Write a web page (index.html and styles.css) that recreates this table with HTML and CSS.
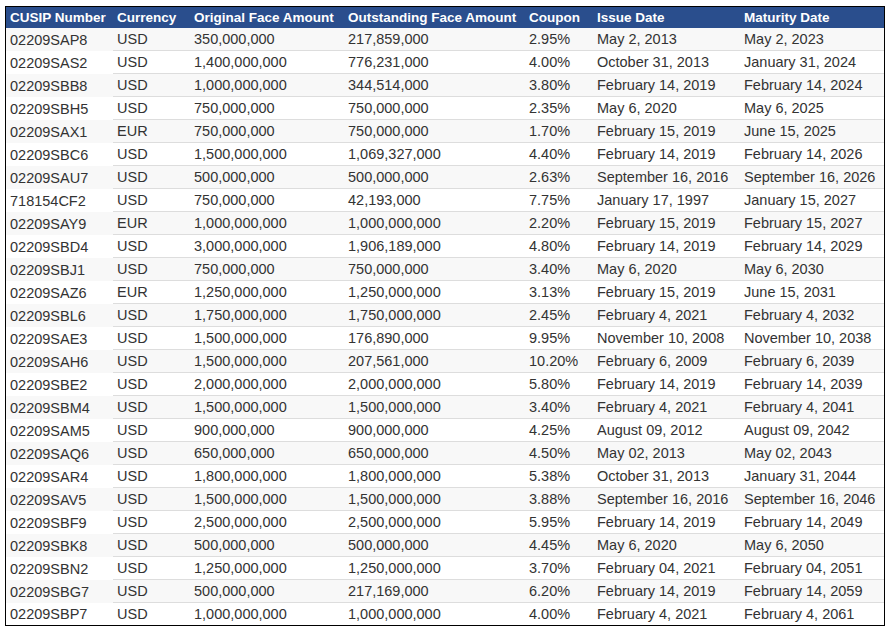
FILE: index.html
```html
<!DOCTYPE html>
<html>
<head>
<meta charset="utf-8">
<link rel="stylesheet" href="styles.css">
</head>
<body>
<table class="bonds">
<colgroup>
<col class="c1"><col class="c2"><col class="c3"><col class="c4"><col class="c5"><col class="c6"><col class="c7">
</colgroup>
<thead>
<tr><th>CUSIP Number</th><th>Currency</th><th>Original Face Amount</th><th>Outstanding Face Amount</th><th>Coupon</th><th>Issue Date</th><th>Maturity Date</th></tr>
</thead>
<tbody>
<tr><td>02209SAP8</td><td>USD</td><td>350,000,000</td><td>217,859,000</td><td>2.95%</td><td>May 2, 2013</td><td>May 2, 2023</td></tr>
<tr><td>02209SAS2</td><td>USD</td><td>1,400,000,000</td><td>776,231,000</td><td>4.00%</td><td>October 31, 2013</td><td>January 31, 2024</td></tr>
<tr><td>02209SBB8</td><td>USD</td><td>1,000,000,000</td><td>344,514,000</td><td>3.80%</td><td>February 14, 2019</td><td>February 14, 2024</td></tr>
<tr><td>02209SBH5</td><td>USD</td><td>750,000,000</td><td>750,000,000</td><td>2.35%</td><td>May 6, 2020</td><td>May 6, 2025</td></tr>
<tr><td>02209SAX1</td><td>EUR</td><td>750,000,000</td><td>750,000,000</td><td>1.70%</td><td>February 15, 2019</td><td>June 15, 2025</td></tr>
<tr><td>02209SBC6</td><td>USD</td><td>1,500,000,000</td><td>1,069,327,000</td><td>4.40%</td><td>February 14, 2019</td><td>February 14, 2026</td></tr>
<tr><td>02209SAU7</td><td>USD</td><td>500,000,000</td><td>500,000,000</td><td>2.63%</td><td>September 16, 2016</td><td>September 16, 2026</td></tr>
<tr><td>718154CF2</td><td>USD</td><td>750,000,000</td><td>42,193,000</td><td>7.75%</td><td>January 17, 1997</td><td>January 15, 2027</td></tr>
<tr><td>02209SAY9</td><td>EUR</td><td>1,000,000,000</td><td>1,000,000,000</td><td>2.20%</td><td>February 15, 2019</td><td>February 15, 2027</td></tr>
<tr><td>02209SBD4</td><td>USD</td><td>3,000,000,000</td><td>1,906,189,000</td><td>4.80%</td><td>February 14, 2019</td><td>February 14, 2029</td></tr>
<tr><td>02209SBJ1</td><td>USD</td><td>750,000,000</td><td>750,000,000</td><td>3.40%</td><td>May 6, 2020</td><td>May 6, 2030</td></tr>
<tr><td>02209SAZ6</td><td>EUR</td><td>1,250,000,000</td><td>1,250,000,000</td><td>3.13%</td><td>February 15, 2019</td><td>June 15, 2031</td></tr>
<tr><td>02209SBL6</td><td>USD</td><td>1,750,000,000</td><td>1,750,000,000</td><td>2.45%</td><td>February 4, 2021</td><td>February 4, 2032</td></tr>
<tr><td>02209SAE3</td><td>USD</td><td>1,500,000,000</td><td>176,890,000</td><td>9.95%</td><td>November 10, 2008</td><td>November 10, 2038</td></tr>
<tr><td>02209SAH6</td><td>USD</td><td>1,500,000,000</td><td>207,561,000</td><td>10.20%</td><td>February 6, 2009</td><td>February 6, 2039</td></tr>
<tr><td>02209SBE2</td><td>USD</td><td>2,000,000,000</td><td>2,000,000,000</td><td>5.80%</td><td>February 14, 2019</td><td>February 14, 2039</td></tr>
<tr><td>02209SBM4</td><td>USD</td><td>1,500,000,000</td><td>1,500,000,000</td><td>3.40%</td><td>February 4, 2021</td><td>February 4, 2041</td></tr>
<tr><td>02209SAM5</td><td>USD</td><td>900,000,000</td><td>900,000,000</td><td>4.25%</td><td>August 09, 2012</td><td>August 09, 2042</td></tr>
<tr><td>02209SAQ6</td><td>USD</td><td>650,000,000</td><td>650,000,000</td><td>4.50%</td><td>May 02, 2013</td><td>May 02, 2043</td></tr>
<tr><td>02209SAR4</td><td>USD</td><td>1,800,000,000</td><td>1,800,000,000</td><td>5.38%</td><td>October 31, 2013</td><td>January 31, 2044</td></tr>
<tr><td>02209SAV5</td><td>USD</td><td>1,500,000,000</td><td>1,500,000,000</td><td>3.88%</td><td>September 16, 2016</td><td>September 16, 2046</td></tr>
<tr><td>02209SBF9</td><td>USD</td><td>2,500,000,000</td><td>2,500,000,000</td><td>5.95%</td><td>February 14, 2019</td><td>February 14, 2049</td></tr>
<tr><td>02209SBK8</td><td>USD</td><td>500,000,000</td><td>500,000,000</td><td>4.45%</td><td>May 6, 2020</td><td>May 6, 2050</td></tr>
<tr><td>02209SBN2</td><td>USD</td><td>1,250,000,000</td><td>1,250,000,000</td><td>3.70%</td><td>February 04, 2021</td><td>February 04, 2051</td></tr>
<tr><td>02209SBG7</td><td>USD</td><td>500,000,000</td><td>217,169,000</td><td>6.20%</td><td>February 14, 2019</td><td>February 14, 2059</td></tr>
<tr><td>02209SBP7</td><td>USD</td><td>1,000,000,000</td><td>1,000,000,000</td><td>4.00%</td><td>February 4, 2021</td><td>February 4, 2061</td></tr>
</tbody>
</table>
</body>
</html>
```
FILE: styles.css
```css
html, body {
  background: #ffffff;
}
body {
  margin: 6px 0 0 5px;
  font-family: "Liberation Sans", Arial, sans-serif;
}
.bonds {
  border: 1px solid #000000;
  border-collapse: separate;
  border-spacing: 0;
  table-layout: fixed;
  width: 880px;
}
.c1 { width: 107px; }
.c2 { width: 77px; }
.c3 { width: 154px; }
.c4 { width: 181px; }
.c5 { width: 68px; }
.c6 { width: 147px; }
.c7 { width: 144px; }
.bonds th {
  background: #2a4e8d;
  color: #ffffff;
  font-weight: bold;
  font-size: 13.5px;
  text-align: left;
  padding: 0 0 0 4px;
  height: 21px;
  line-height: 21px;
  white-space: nowrap;
}
.bonds td {
  color: #333333;
  font-size: 14.5px;
  padding: 0 0 0 4px;
  height: 22px;
  line-height: 22px;
  border-bottom: 1px solid #dddddd;
  white-space: nowrap;
}
.bonds td:first-child {
  border-bottom: none;
}
.bonds tbody tr:nth-child(odd) td {
  background: #f8f8f8;
}
.bonds tbody tr:last-child td {
  border-bottom: none;
}
```
